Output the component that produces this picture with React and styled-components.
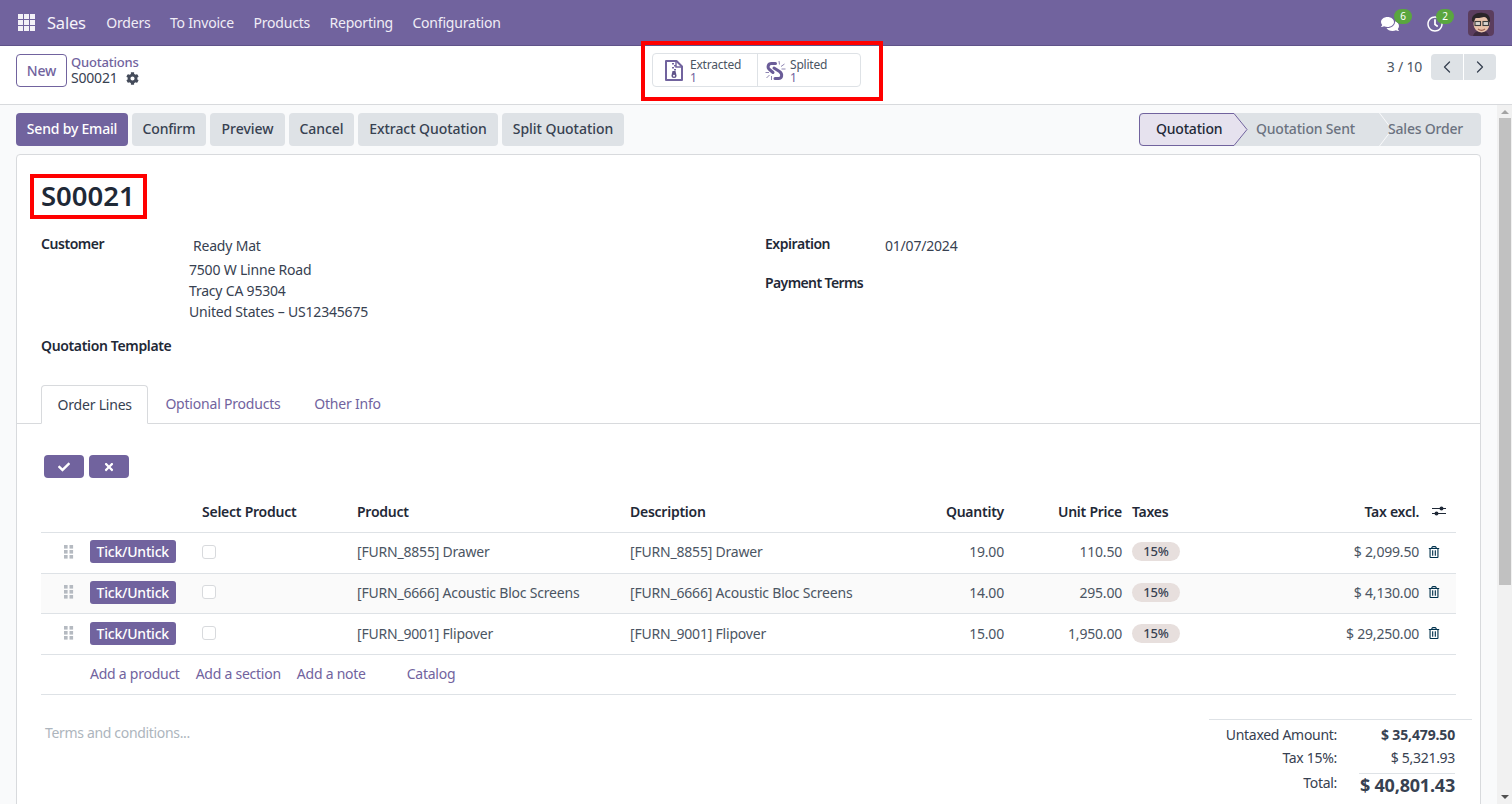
import React from "react";
import styled, { createGlobalStyle } from "styled-components";
import { FaCog, FaCheck, FaTimes, FaRegTrashAlt, FaComments, FaRegClock } from "react-icons/fa";
import { ChevronLeft, ChevronRight } from "lucide-react";

const Global = createGlobalStyle`
    html, body { margin: 0; height: 100%; overflow: hidden; }
    body {
        font-family: "Noto Sans", "Open Sans", sans-serif;
        font-size: 14px;
        letter-spacing: -0.2px;
        color: #374151;
    }
    * { box-sizing: border-box; }
`;

const Page = styled.div`
    height: 804px;
    display: flex;
    flex-direction: column;
    overflow: hidden;
`;

const Navbar = styled.header`
    height: 46px;
    flex: none;
    background: #71639e;
    color: #fff;
    display: flex;
    align-items: center;
    padding: 0 18px 0 18px;
    border-bottom: 1px solid #5f5389;
`;

const AppGrid = styled.svg`
    width: 17px;
    height: 17px;
    margin-right: 12px;
`;

const Brand = styled.span`
    font-size: 16.5px;
    margin-right: 20.5px;
    color: #f5f3fa;
`;

const NavLink = styled.a`
    margin-right: 19.4px;
    color: #f0edf6;
`;

const NavRight = styled.div`
    margin-left: auto;
    display: flex;
    align-items: center;
`;

const Systray = styled.div`
    position: relative;
    width: ${p => p.$w}px;
    height: 24px;
    display: flex;
    align-items: center;
    font-size: ${p => p.$size}px;
    svg { margin-top: 3px; }
`;

const Badge = styled.span`
    position: absolute;
    left: ${p => p.$left}px;
    top: -2px;
    width: 18px;
    height: 15px;
    border-radius: 8px;
    background: #5aa63f;
    color: #fff;
    font-size: 10px;
    line-height: 15px;
    text-align: center;
`;

const Avatar = styled.svg`
    width: 26px;
    height: 26px;
    border-radius: 4px;
`;

const ControlPanel = styled.div`
    position: relative;
    height: 59px;
    flex: none;
    background: #fff;
    border-bottom: 1px solid #d8dadd;
    display: flex;
    padding: 8px 16px 0;
`;

const NewButton = styled.button`
    width: 51px;
    height: 33px;
    background: #fff;
    border: 1px solid #71639e;
    border-radius: 4px;
    color: #71639e;
    font: inherit;
    font-weight: 500;
    letter-spacing: inherit;
`;

const Breadcrumb = styled.div`
    margin-left: 4px;
    line-height: 16px;
`;

const Crumb = styled.div`
    color: #71639e;
    font-weight: 500;
    font-size: 13px;
`;

const Current = styled.div`
    display: flex;
    align-items: center;
    gap: 8px;
    font-size: 14px;
    svg { font-size: 13px; color: #444b5a; }
`;

const StatButtons = styled.div`
    position: absolute;
    left: 652px;
    top: 7px;
    width: 209px;
    height: 34px;
    border: 1px solid #dee2e6;
    border-radius: 4px;
    display: flex;
`;

const StatButton = styled.div`
    width: ${p => p.$w}px;
    display: flex;
    align-items: center;
    padding-left: ${p => p.$pad}px;
    gap: ${p => p.$gap}px;
    font-size: 12px;
    line-height: 13px;
    color: #4b5563;
    & + & { border-left: 1px solid #dee2e6; }
`;

const StatText = styled.div`
    padding-top: 2px;
`;

const StatValue = styled.div`
    color: #71639e;
`;

const StatIcon = styled.svg`
    flex: none;
`;

const RedFrame = styled.div`
    position: absolute;
    left: 641px;
    top: -5px;
    width: 242px;
    height: 60px;
    border: 4px solid #f00;
    pointer-events: none;
`;

const Pager = styled.div`
    margin-left: auto;
    display: flex;
    align-items: flex-start;
    gap: 9px;
    line-height: 26px;
    color: #4b5563;
`;

const PagerButtons = styled.div`
    display: flex;
    gap: 1px;
`;

const PagerButton = styled.button`
    width: 32px;
    height: 26px;
    padding: 0;
    border: 0;
    background: #dee2e6;
    color: #374151;
    border-radius: ${p => p.$side === "left" ? "4px 0 0 4px" : "0 4px 4px 0"};
    display: flex;
    align-items: center;
    justify-content: center;
`;

const Body = styled.div`
    flex: 1;
    min-height: 0;
    display: flex;
    background: #f9fafb;
`;

const Content = styled.main`
    flex: 1;
    min-width: 0;
    padding: 8px 16px 0;
    overflow: hidden;
`;

const Scrollbar = styled.div`
    width: 15px;
    flex: none;
    background: #f1f1f1;
    display: flex;
    flex-direction: column;
    align-items: center;
    padding-top: 13px;
    position: relative;
`;

const ScrollThumb = styled.div`
    width: 12px;
    height: 467px;
    background: #c1c1c1;
`;

const ScrollArrow = styled.div`
    position: absolute;
    left: 4px;
    ${p => p.$up ? "top: 5px; border-bottom: 4px solid #a3a3a3;" : "bottom: 5px; border-top: 4px solid #505050;"}
    border-left: 4px solid transparent;
    border-right: 4px solid transparent;
`;

const StatusRow = styled.div`
    display: flex;
    align-items: flex-start;
    margin-bottom: 8px;
`;

const Actions = styled.div`
    display: flex;
    gap: 4px;
`;

const ActionButton = styled.button`
    width: ${p => p.$w}px;
    height: 33px;
    padding: 0 0 2px;
    border: 0;
    border-radius: 4px;
    font: inherit;
    letter-spacing: ${p => p.$tight ? "-0.2px" : "-0.05px"};
    font-weight: 500;
    background: ${p => p.$primary ? "#71639e" : "#dee2e6"};
    color: ${p => p.$primary ? "#fff" : "#374151"};
`;

const Stages = styled.div`
    margin-left: auto;
    display: flex;
    height: 33px;
    background: #dee2e6;
    border-radius: 4px;
    font-weight: 500;
    color: #6b7280;
`;

const Stage = styled.div`
    position: relative;
    width: ${p => p.$w}px;
    display: flex;
    align-items: center;
    padding: 0 0 3px ${p => p.$pad}px;
`;

const ActiveStage = styled(Stage)`
    color: #1f2937;
    border-radius: 4px 0 0 4px;
`;

const StageArrow = styled.svg`
    position: absolute;
    right: -13px;
    top: 0;
    width: 14px;
    height: 33px;
    z-index: 1;
`;

const ActiveBack = styled.svg`
    position: absolute;
    left: 0;
    top: 0;
    width: 109px;
    height: 33px;
`;

const StageLabel = styled.span`
    position: relative;
    z-index: 2;
`;

const Sheet = styled.div`
    background: #fff;
    border: 1px solid #d8dadd;
    border-radius: 4px 4px 0 0;
    height: 700px;
    padding: 19px 0 0;
`;

const SheetInner = styled.div`
    padding: 0 24px 0 13px;
`;

const TitleFrame = styled.h1`
    display: inline-block;
    margin: 0;
    width: 117px;
    height: 45px;
    border: 4px solid #f00;
    padding-left: 7px;
    font-size: 27.5px;
    line-height: 36px;
    font-weight: 600;
    color: #1f2937;
    letter-spacing: 0;
`;

const FormGrid = styled.div`
    display: grid;
    grid-template-columns: 724px 1fr;
    margin-top: 14px;
    padding-left: 11px;
`;

const FieldColumn = styled.div`
    display: flex;
    flex-direction: column;
`;

const Field = styled.div`
    display: grid;
    grid-template-columns: ${p => p.$label}px 1fr;
    margin-bottom: ${p => p.$gap || 0}px;
`;

const Label = styled.div`
    font-weight: 600;
    color: #1f2937;
    line-height: 21px;
    letter-spacing: ${p => p.$spacing || "-0.45px"};
`;

const Value = styled.div`
    line-height: 21px;
    padding-top: 2px;
    color: #374151;
`;

const AddressLine = styled.div`
    line-height: 21px;
`;

const Partner = styled.div`
    padding-left: 4px;
    margin-bottom: 3px;
`;

const Tabs = styled.div`
    display: flex;
    height: 39px;
    margin-top: 29px;
    padding-left: 24px;
    border-bottom: 1px solid #d8dadd;
`;

const Tab = styled.div`
    padding: 0 16.6px 0 17px;
    height: 39px;
    line-height: 37px;
    color: #71639e;
`;

const ActiveTab = styled(Tab)`
    padding: 0 15.5px;
    color: #374151;
    background: #fff;
    border: 1px solid #d8dadd;
    border-bottom: 1px solid #fff;
    border-radius: 4px 4px 0 0;
`;

const TabBody = styled.div`
    padding: 31px 24px 0;
`;

const IconButtons = styled.div`
    display: flex;
    gap: 5px;
    margin-left: 3px;
    margin-bottom: 14px;
`;

const SmallButton = styled.button`
    width: 40px;
    height: 23px;
    border: 0;
    border-radius: 4px;
    background: #71639e;
    color: #fff;
    display: flex;
    align-items: center;
    justify-content: center;
    font-size: 12px;
`;

const Row = styled.div`
    display: grid;
    grid-template-columns: 42px 112px 155px 273px 280px 108px 118px 197px 100px 30px;
    align-items: center;
    height: 40.67px;
    padding-bottom: 2px;
    border-bottom: 1px solid #dee2e6;
    background: ${p => p.$striped ? "#fafafa" : "transparent"};
    color: #4b5563;
`;

const HeadRow = styled(Row)`
    height: 41px;
    font-weight: 600;
    letter-spacing: -0.25px;
    color: #1f2937;
`;

const Cell = styled.div`
    padding: 0 7px;
    text-align: ${p => p.$right ? "right" : "left"};
    white-space: nowrap;
    display: flex;
    justify-content: ${p => p.$right ? "flex-end" : "flex-start"};
`;

const TaxCell = styled(Cell)`
    padding: 0 3px;
`;

const IconCell = styled(Cell)`
    padding: 0 0 0 ${p => p.$pad}px;
`;

const Handle = styled.svg`
    width: 10px;
    height: 14px;
    margin-left: 16px;
`;

const TickButton = styled.button`
    height: 23px;
    padding: 0 6.5px;
    border: 0;
    border-radius: 3px;
    background: #71639e;
    color: #fff;
    font: inherit;
    font-weight: 500;
    letter-spacing: inherit;
`;

const Check = styled.span`
    width: 14px;
    height: 14px;
    border: 1px solid #d8dadd;
    border-radius: 3px;
    background: #fff;
`;

const TaxBadge = styled.span`
    width: 48px;
    height: 19px;
    border-radius: 10px;
    background: #e7dfdd;
    font-size: 13px;
    font-weight: 500;
    line-height: 19px;
    text-align: center;
    color: #374151;
`;

const Trash = styled(FaRegTrashAlt)`
    font-size: 12px;
    color: #01324d;
`;

const AddRow = styled.div`
    height: 40px;
    border-bottom: 1px solid #dee2e6;
    display: flex;
    align-items: center;
    padding: 0 0 1px 49px;
    gap: 16px;
    letter-spacing: -0.25px;
    color: #71639e;
`;

const CatalogLink = styled.a`
    margin-left: 25px;
`;

const Bottom = styled.div`
    display: flex;
    justify-content: space-between;
    margin-top: 24px;
    padding-left: 4px;
`;

const Terms = styled.div`
    color: #adb5bd;
    padding-top: 4px;
    letter-spacing: -0.33px;
`;

const Totals = styled.div`
    width: 263px;
    border-top: 1px solid #dee2e6;
    margin-right: -16px;
    padding: 3px 17px 0 0;
    letter-spacing: -0.3px;
`;

const TotalRow = styled.div`
    display: grid;
    grid-template-columns: 128px 1fr;
    align-items: center;
    line-height: 23px;
    text-align: right;
`;

const TotalValue = styled.div`
    font-weight: ${p => p.$bold ? 700 : 400};
    letter-spacing: ${p => p.$bold ? "-0.15px" : "-0.3px"};
`;

const GrandValue = styled.div`
    font-size: 18px;
    font-weight: 700;
    margin: 4px 0 0 22px;
    border-top: 1px solid #dee2e6;
    line-height: 23px;
    letter-spacing: -0.2px;
`;

const lines = [
    { code: "[FURN_8855] Drawer", qty: "19.00", price: "110.50", total: "$ 2,099.50" },
    { code: "[FURN_6666] Acoustic Bloc Screens", qty: "14.00", price: "295.00", total: "$ 4,130.00", striped: true },
    { code: "[FURN_9001] Flipover", qty: "15.00", price: "1,950.00", total: "$ 29,250.00" },
];

function GridIcon() {
    const cells = [];
    for (let y = 0; y < 3; y++) {
        for (let x = 0; x < 3; x++) {
            cells.push(<rect key={x + "-" + y} x={x * 6} y={y * 6} width="5" height="5" fill="#f3f1f7" />);
        }
    }
    return <AppGrid viewBox="0 0 17 17">{cells}</AppGrid>;
}

function DragHandle() {
    const dots = [];
    for (let y = 0; y < 3; y++) {
        for (let x = 0; x < 2; x++) {
            dots.push(<rect key={x + "-" + y} x={x * 5.5} y={y * 5} width="3.6" height="3.6" fill="#b5bac1" />);
        }
    }
    return <Handle viewBox="0 0 10 14">{dots}</Handle>;
}

function Face() {
    return (
        <Avatar viewBox="0 0 26 26">
            <rect width="26" height="26" fill="#5b3d5e" />
            <path d="M5 26c1-4 4-5 8-5s7 1 8 5z" fill="#3f2b40" />
            <ellipse cx="13.5" cy="14" rx="8" ry="8.5" fill="#e9c2aa" />
            <path d="M4 11C3 5 9 2 15 3c4 0 8 3 7 9l-2-1c-1-3-2-4-4-4-3 1-7 1-9 1l-1 4z" fill="#2b2529" />
            <rect x="7" y="11.5" width="5.5" height="4" fill="#d8d4d0" stroke="#3d3d3d" strokeWidth="1.1" />
            <rect x="15" y="11.5" width="5.5" height="4" fill="#d8d4d0" stroke="#3d3d3d" strokeWidth="1.1" />
            <path d="M10 19c2 1.500 5 1.500 7 0" fill="none" stroke="#9c5f50" strokeWidth="1.1" />
        </Avatar>
    );
}

function Adjust() {
    return (
        <svg width="16" height="14" viewBox="0 0 16 14">
            <path d="M1 4.500h14M1 9.500h14" stroke="#1f2937" strokeWidth="1" />
            <circle cx="10.500" cy="4.500" r="2" fill="#1f2937" />
            <circle cx="5.500" cy="9.500" r="2" fill="#1f2937" />
        </svg>
    );
}

function ZipFile() {
    return (
        <StatIcon width="18" height="21" viewBox="0 0 18 21">
            <path d="M1 1h10.500L17 6.500V20H1z" fill="none" stroke="#71639e" strokeWidth="2" strokeLinejoin="round" />
            <path d="M11 1.500V7h5.500" fill="none" stroke="#71639e" strokeWidth="1.400" />
            <path d="M7 3h2v1.500H7zM9 5h2v1.500H9zM7 7h2v1.500H7zM9 9h2v1.500H9z" fill="#71639e" />
            <path d="M7.500 11h3l1 4.500a2.500 2.500 0 1 1-5 0z" fill="#5f5389" />
            <circle cx="9" cy="15.800" r="1" fill="#fff" />
        </StatIcon>
    );
}

function BrokenChain() {
    return (
        <StatIcon width="21" height="21" viewBox="0 0 21 21">
            <path d="M10.500 3.500H6.500C3 3.500 2 7.500 4.500 9.500L8 12.500" fill="none" stroke="#6a5c98" strokeWidth="3" strokeLinecap="round" />
            <path d="M9 8L14.500 11.500C18 14 17 18.500 13.500 18.500H10" fill="none" stroke="#6a5c98" strokeWidth="3" strokeLinecap="round" />
            <path d="M14 1l.5 3.500M16 6.500l3.500-2.500M16.500 9h4M.5 12.500H4M1.500 18L4.500 15M6.500 16v4" stroke="#8f86b3" strokeWidth="1" />
        </StatIcon>
    );
}

export default function App() {
    return (
        <Page>
            <Global />
            <Navbar>
                <GridIcon />
                <Brand>Sales</Brand>
                <NavLink>Orders</NavLink>
                <NavLink>To Invoice</NavLink>
                <NavLink>Products</NavLink>
                <NavLink>Reporting</NavLink>
                <NavLink>Configuration</NavLink>
                <NavRight>
                    <Systray $w={46} $size={18}>
                        <FaComments />
                        <Badge $left={13}>6</Badge>
                    </Systray>
                    <Systray $w={41} $size={16}>
                        <FaRegClock />
                        <Badge $left={9}>2</Badge>
                    </Systray>
                    <Face />
                </NavRight>
            </Navbar>
            <ControlPanel>
                <NewButton>New</NewButton>
                <Breadcrumb>
                    <Crumb>Quotations</Crumb>
                    <Current>S00021 <FaCog /></Current>
                </Breadcrumb>
                <StatButtons>
                    <StatButton $w={104} $pad={12} $gap={7}>
                        <ZipFile />
                        <StatText>Extracted<StatValue>1</StatValue></StatText>
                    </StatButton>
                    <StatButton $w={103} $pad={7} $gap={4}>
                        <BrokenChain />
                        <StatText>Splited<StatValue>1</StatValue></StatText>
                    </StatButton>
                </StatButtons>
                <RedFrame />
                <Pager>
                    3 / 10
                    <PagerButtons>
                        <PagerButton $side="left"><ChevronLeft size={20} strokeWidth={1.5} /></PagerButton>
                        <PagerButton $side="right"><ChevronRight size={20} strokeWidth={1.5} /></PagerButton>
                    </PagerButtons>
                </Pager>
            </ControlPanel>
            <Body>
                <Content>
                    <StatusRow>
                        <Actions>
                            <ActionButton $primary $tight $w={112}>Send by Email</ActionButton>
                            <ActionButton $tight $w={74}>Confirm</ActionButton>
                            <ActionButton $w={75}>Preview</ActionButton>
                            <ActionButton $w={65}>Cancel</ActionButton>
                            <ActionButton $w={140}>Extract Quotation</ActionButton>
                            <ActionButton $w={122}>Split Quotation</ActionButton>
                        </Actions>
                        <Stages>
                            <ActiveStage $w={109} $pad={17}>
                                <ActiveBack viewBox="0 0 109 33">
                                    <path d="M4 .5H95L108 16.500 95 32.500H4Q.5 32.500.5 29V4Q.5.5 4 .5Z" fill="#e6e2ee" stroke="#71639e" />
                                </ActiveBack>
                                <StageLabel>Quotation</StageLabel>
                            </ActiveStage>
                            <Stage $w={132} $pad={8}>
                                <StageLabel>Quotation Sent</StageLabel>
                                <StageArrow viewBox="0 0 14 33">
                                    <path d="M.5 0L13 16.500.5 33" fill="none" stroke="#f9fafb" />
                                </StageArrow>
                            </Stage>
                            <Stage $w={101} $pad={8}>
                                <StageLabel>Sales Order</StageLabel>
                            </Stage>
                        </Stages>
                    </StatusRow>
                    <Sheet>
                        <SheetInner>
                            <TitleFrame>S00021</TitleFrame>
                            <FormGrid>
                                <FieldColumn>
                                    <Field $label={148} $gap={13}>
                                        <Label>Customer</Label>
                                        <Value>
                                            <Partner>Ready Mat</Partner>
                                            <AddressLine>7500 W Linne Road</AddressLine>
                                            <AddressLine>Tracy CA 95304</AddressLine>
                                            <AddressLine>United States – US12345675</AddressLine>
                                        </Value>
                                    </Field>
                                    <Field $label={148}>
                                        <Label $spacing="-0.35px">Quotation Template</Label>
                                    </Field>
                                </FieldColumn>
                                <FieldColumn>
                                    <Field $label={120} $gap={16}>
                                        <Label>Expiration</Label>
                                        <Value>01/07/2024</Value>
                                    </Field>
                                    <Field $label={120}>
                                        <Label $spacing="-0.6px">Payment Terms</Label>
                                    </Field>
                                </FieldColumn>
                            </FormGrid>
                        </SheetInner>
                        <Tabs>
                            <ActiveTab>Order Lines</ActiveTab>
                            <Tab>Optional Products</Tab>
                            <Tab>Other Info</Tab>
                        </Tabs>
                        <TabBody>
                            <IconButtons>
                                <SmallButton><FaCheck /></SmallButton>
                                <SmallButton><FaTimes /></SmallButton>
                            </IconButtons>
                            <HeadRow>
                                <Cell />
                                <Cell />
                                <Cell>Select Product</Cell>
                                <Cell>Product</Cell>
                                <Cell>Description</Cell>
                                <Cell $right>Quantity</Cell>
                                <Cell $right>Unit Price</Cell>
                                <TaxCell>Taxes</TaxCell>
                                <Cell $right>Tax excl.</Cell>
                                <IconCell $pad={5}><Adjust /></IconCell>
                            </HeadRow>
                            {lines.map(line => (
                                <Row key={line.code} $striped={line.striped}>
                                    <Cell><DragHandle /></Cell>
                                    <Cell><TickButton>Tick/Untick</TickButton></Cell>
                                    <Cell><Check /></Cell>
                                    <Cell>{line.code}</Cell>
                                    <Cell>{line.code}</Cell>
                                    <Cell $right>{line.qty}</Cell>
                                    <Cell $right>{line.price}</Cell>
                                    <TaxCell><TaxBadge>15%</TaxBadge></TaxCell>
                                    <Cell $right>{line.total}</Cell>
                                    <IconCell $pad={2}><Trash /></IconCell>
                                </Row>
                            ))}
                            <AddRow>
                                <a>Add a product</a>
                                <a>Add a section</a>
                                <a>Add a note</a>
                                <CatalogLink>Catalog</CatalogLink>
                            </AddRow>
                            <Bottom>
                                <Terms>Terms and conditions...</Terms>
                                <Totals>
                                    <TotalRow><div>Untaxed Amount:</div><TotalValue $bold>$ 35,479.50</TotalValue></TotalRow>
                                    <TotalRow><div>Tax 15%:</div><TotalValue>$ 5,321.93</TotalValue></TotalRow>
                                    <TotalRow><div>Total:</div><GrandValue>$ 40,801.43</GrandValue></TotalRow>
                                </Totals>
                            </Bottom>
                        </TabBody>
                    </Sheet>
                </Content>
                <Scrollbar>
                    <ScrollArrow $up />
                    <ScrollThumb />
                    <ScrollArrow />
                </Scrollbar>
            </Body>
        </Page>
    );
}
